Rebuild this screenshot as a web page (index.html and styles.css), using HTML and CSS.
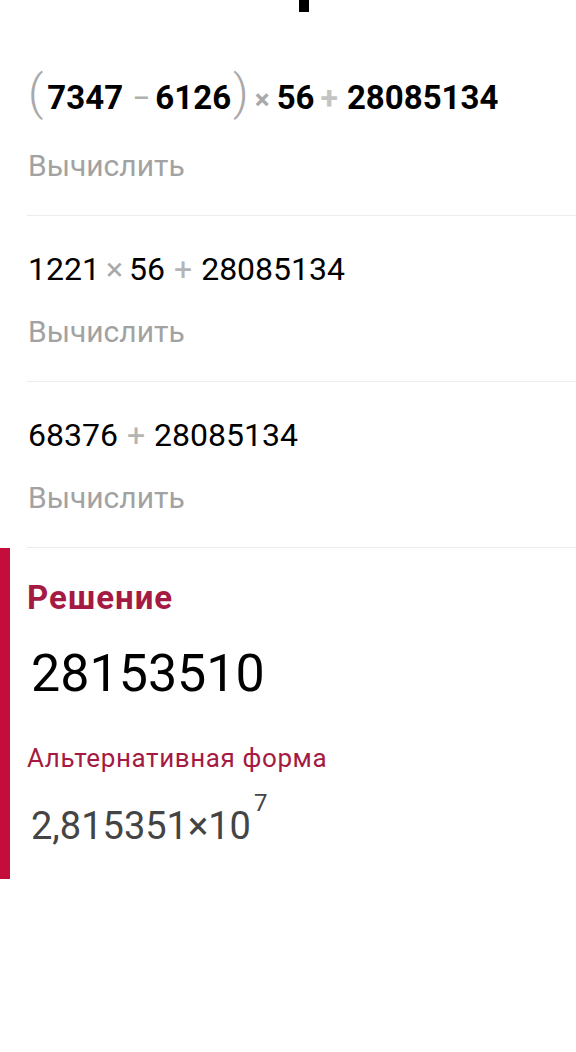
FILE: index.html
```html
<!DOCTYPE html>
<html lang="ru">
<head>
<meta charset="utf-8">
<title>Решение</title>
<link rel="stylesheet" href="styles.css">
</head>
<body>
<div class="page">
  <div class="top-stub"><div class="stub-mark"></div></div>

  <div class="step step-first">
    <div class="expr expr-bold">
      <span class="paren">(</span><span class="num">7347</span><span class="op op-minus">−</span><span class="num">6126</span><span class="paren">)</span><span class="op op-times">×</span><span class="num">56</span><span class="op op-plus">+</span><span class="num">28085134</span>
    </div>
    <div class="calc">Вычислить</div>
  </div>

  <div class="step">
    <div class="expr">
      <span class="num">1221</span><span class="op op-times">×</span><span class="num">56</span><span class="op op-plus">+</span><span class="num">28085134</span>
    </div>
    <div class="calc">Вычислить</div>
  </div>

  <div class="step">
    <div class="expr">
      <span class="num">68376</span><span class="op op-plus">+</span><span class="num">28085134</span>
    </div>
    <div class="calc">Вычислить</div>
  </div>

  <div class="solution">
    <div class="sol-title">Решение</div>
    <div class="sol-value">28153510</div>
    <div class="alt-title">Альтернативная форма</div>
    <div class="alt-value">2,815351×10<span class="exp">7</span></div>
  </div>
</div>
</body>
</html>
```

FILE: styles.css
```css
html, body {
  margin: 0;
  padding: 0;
  background: #ffffff;
}

body {
  font-family: Roboto, "Noto Sans", "Liberation Sans", sans-serif;
  color: #000000;
}

.page {
  width: 576px;
}

.top-stub {
  height: 12px;
  display: flex;
}

.stub-mark {
  margin-left: 299px;
  width: 10px;
  height: 12px;
  background: #000000;
}

.step {
  margin-left: 27px;
  padding: 29px 0 29px 1px;
  border-bottom: 1px solid #ececec;
}

.step-first {
  padding-top: 51px;
}

.expr {
  font-size: 32px;
  line-height: 48px;
  height: 48px;
  white-space: nowrap;
  display: flex;
  align-items: baseline;
}

.step-first .expr {
  line-height: 60px;
  height: 60px;
}

.expr-bold .num {
  font-weight: 700;
  font-size: 33px;
}

.op {
  color: #a9a9a9;
}

.op-times {
  margin: 0 6px 0 6px;
}

.op-plus {
  margin: 0 9px 0 9px;
  color: #b4b4b4;
}

.expr-bold .op-minus {
  margin: 0 5px 0 9px;
  font-weight: 400;
  color: #b0b0b0;
}

.expr-bold .op-times {
  margin: 0 7px 0 6px;
  font-weight: 700;
  font-size: 28px;
}

.expr-bold .op-plus {
  margin: 0 9px 0 6px;
  font-weight: 700;
  color: #c4c4c4;
}

.paren {
  font-size: 48px;
  font-weight: 300;
  color: #a9a9a9;
  margin: 0 4px 0 0;
}

.num + .paren {
  margin: 0 0 0 2px;
}

.calc {
  margin-top: 19px;
  font-size: 30px;
  line-height: 40px;
  color: #a2a2a2;
}

.step-first .calc {
  margin-top: 23px;
}

.solution {
  border-left: 10px solid #c40d3a;
  padding: 30px 0 28px 17px;
}

.sol-title {
  font-size: 33px;
  line-height: 40px;
  font-weight: 700;
  letter-spacing: 1px;
  color: #a51a42;
}

.sol-value {
  margin-top: 26px;
  font-size: 52px;
  line-height: 60px;
  color: #000000;
  padding-left: 4px;
}

.alt-title {
  margin-top: 37px;
  font-size: 26px;
  line-height: 34px;
  letter-spacing: 0.6px;
  color: #a51a42;
}

.alt-value {
  margin-top: 26px;
  font-size: 38px;
  line-height: 50px;
  color: #444444;
  padding-left: 4px;
}

.exp {
  font-size: 24px;
  line-height: 0;
  vertical-align: 28px;
  margin-left: 3px;
}
```
